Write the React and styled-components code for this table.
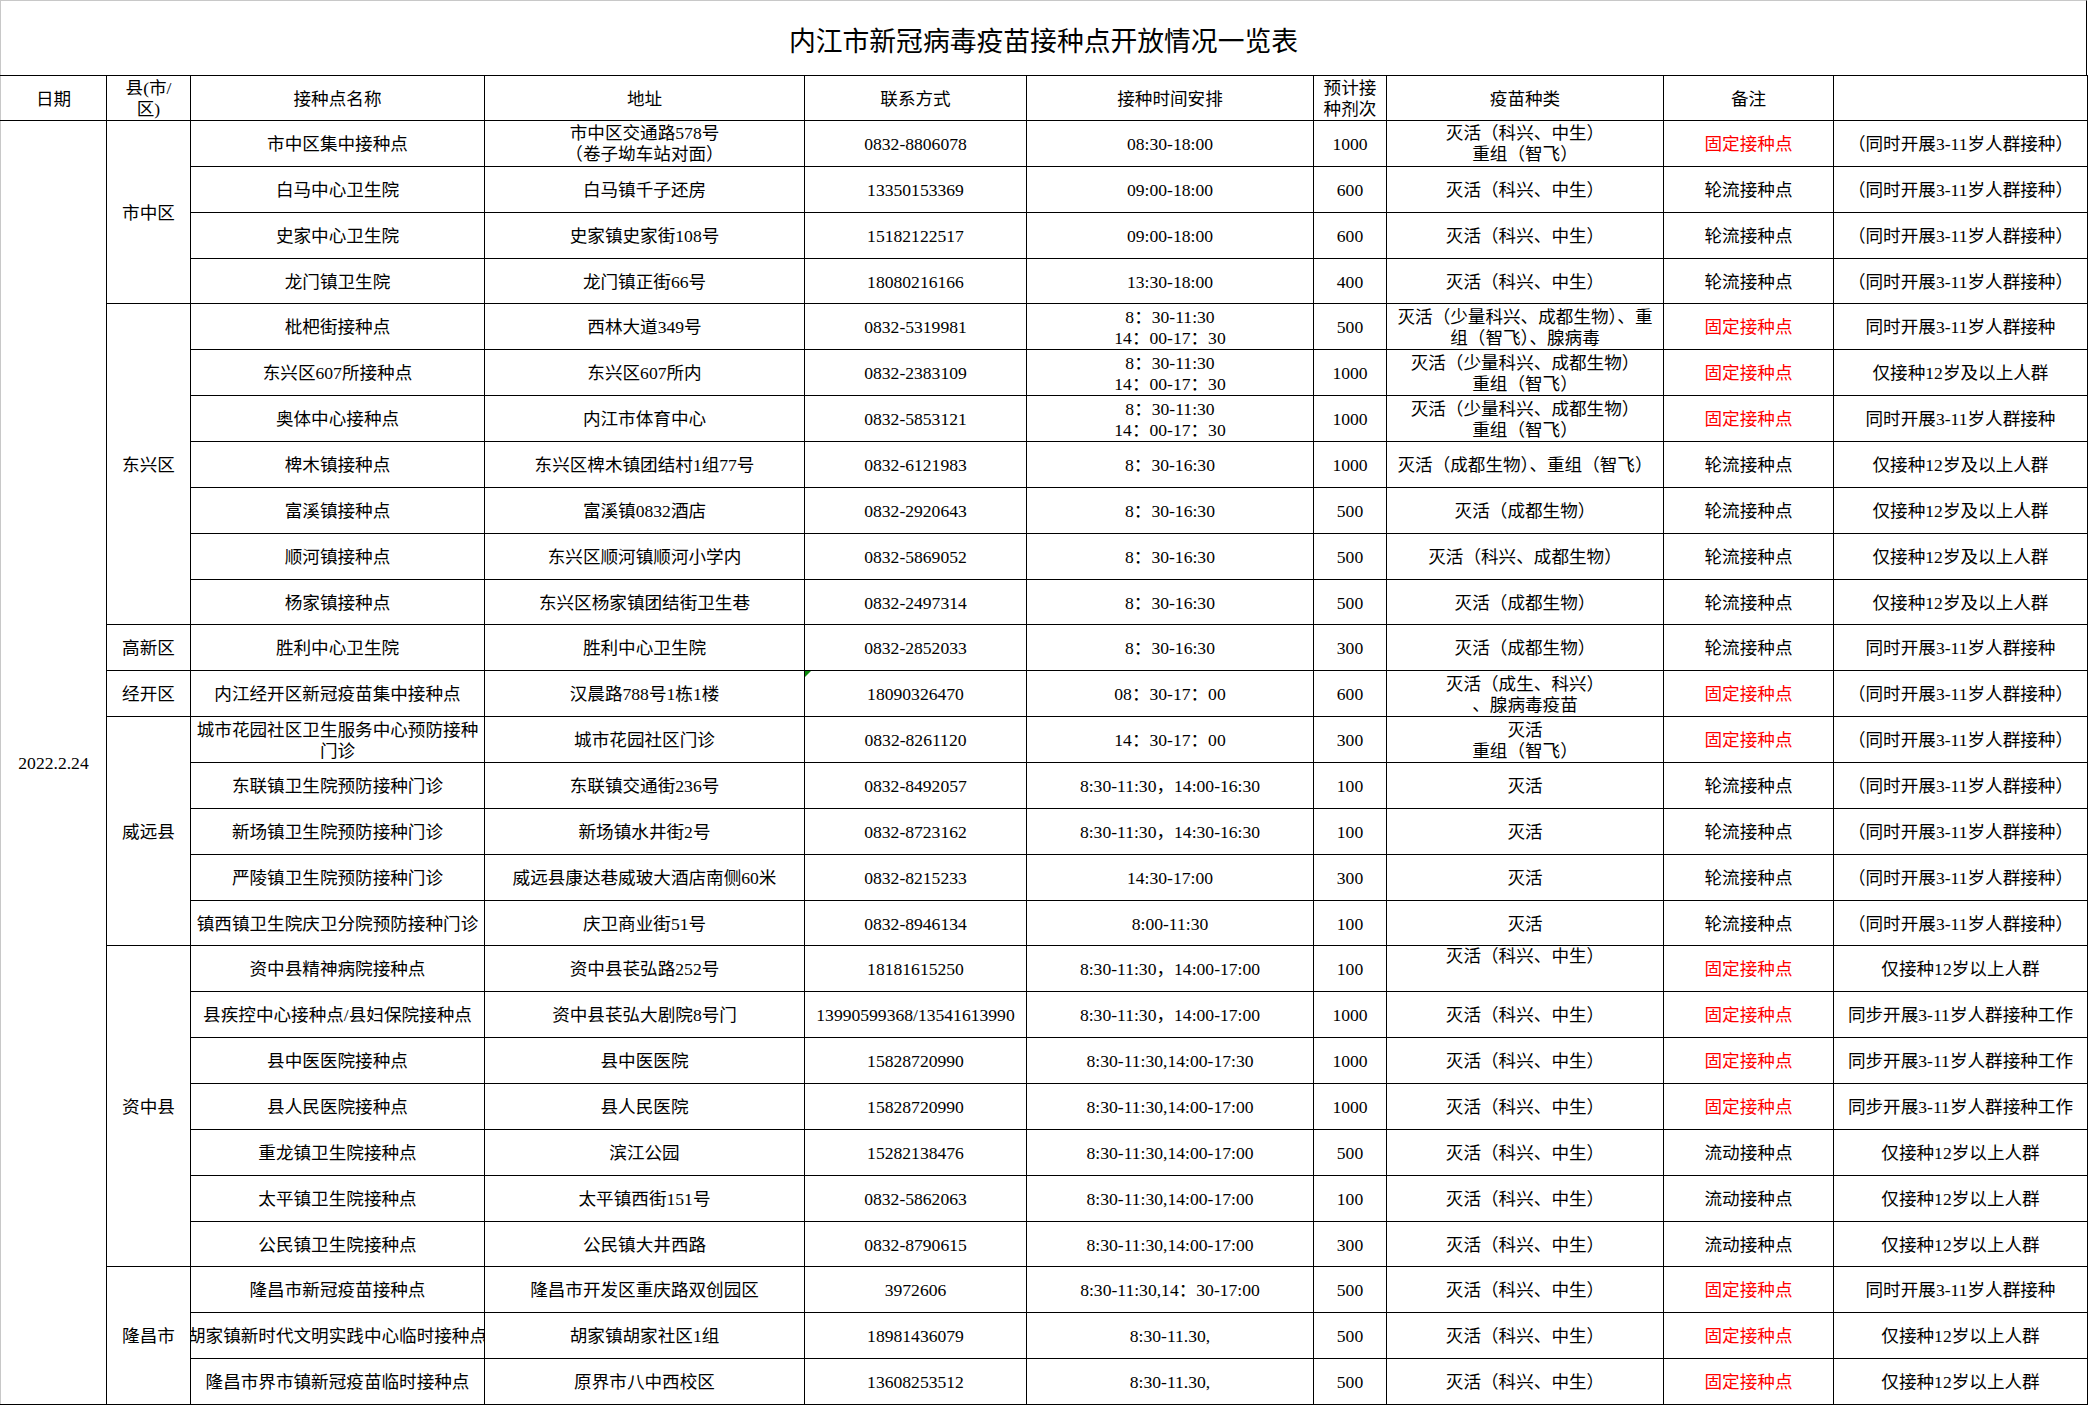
import React from 'react';
import styled, { createGlobalStyle, css } from 'styled-components';

const GlobalStyle = createGlobalStyle`
  html, body { margin: 0; padding: 0; background: #fff; }
  body {
    font-family: "Liberation Serif", "Noto Sans CJK SC", serif;
    color: #000;
  }
`;

const GRID_GREY = '#c8c8c8';

const Sheet = styled.div`
  width: 2087px;
`;

const Title = styled.div`
  height: 75px;
  box-sizing: border-box;
  border-top: 1px solid ${GRID_GREY};
  border-left: 1px solid ${GRID_GREY};
  border-right: 1px solid #000;
  display: flex;
  align-items: center;
  justify-content: center;
  padding-top: 7px;
  font-size: 26.8px;
  line-height: 30px;
`;

const Table = styled.table`
  border-collapse: collapse;
  table-layout: fixed;
  width: 2087px;
  font-size: 17.6px;
  line-height: 21px;
`;

const Col = styled.col`
  width: ${(p) => p.$w}px;
`;

const HeadRow = styled.tr`
  height: 45px;
`;

const DataRow = styled.tr`
  height: 45.86px;
`;

const cellBase = css`
  border: 1px solid #000;
  border-left-color: ${(p) => (p.$edge ? GRID_GREY : '#000')};
  padding: 0;
  font-weight: 400;
  vertical-align: ${(p) => (p.$top ? 'top' : 'middle')};
  color: ${(p) => (p.$red ? '#ff0000' : '#000')};
  position: relative;
`;

const HeadCell = styled.th`
  ${cellBase}
`;

const Cell = styled.td`
  ${cellBase}
`;

const Lines = styled.div`
  display: flex;
  flex-direction: column;
  align-items: center;
  justify-content: center;
  overflow: hidden;
  padding: ${(p) => (p.$top ? '0' : '2px')} 2px 0;
`;

const Line = styled.span`
  white-space: nowrap;
`;

const Flag = styled.span`
  position: absolute;
  top: 0;
  left: 0;
  width: 0;
  height: 0;
  border-top: 6px solid #0a8a0a;
  border-right: 6px solid transparent;
`;

const Text = ({ children, top }) => (
  <Lines $top={top}>
    {String(children)
      .split('\n')
      .map((l, i) => (
        <Line key={i}>{l}</Line>
      ))}
  </Lines>
);

const T1 = '8：30-11:30\n14：00-17：30';
const V1 = '灭活（科兴、中生）';
const N1 = '（同时开展3-11岁人群接种）';
const N2 = '同时开展3-11岁人群接种';
const N3 = '仅接种12岁及以上人群';
const N4 = '仅接种12岁以上人群';
const N5 = '同步开展3-11岁人群接种工作';
const FIX = '固定接种点';
const ROT = '轮流接种点';
const MOV = '流动接种点';

const groups = [
  {
    county: '市中区',
    rows: [
      ['市中区集中接种点', '市中区交通路578号\n（卷子坳车站对面）', '0832-8806078', '08:30-18:00', '1000', '灭活（科兴、中生）\n重组（智飞）', FIX, N1],
      ['白马中心卫生院', '白马镇千子还房', '13350153369', '09:00-18:00', '600', V1, ROT, N1],
      ['史家中心卫生院', '史家镇史家街108号', '15182122517', '09:00-18:00', '600', V1, ROT, N1],
      ['龙门镇卫生院', '龙门镇正街66号', '18080216166', '13:30-18:00', '400', V1, ROT, N1],
    ],
  },
  {
    county: '东兴区',
    rows: [
      ['枇杷街接种点', '西林大道349号', '0832-5319981', T1, '500', '灭活（少量科兴、成都生物）、重\n组（智飞）、腺病毒', FIX, N2],
      ['东兴区607所接种点', '东兴区607所内', '0832-2383109', T1, '1000', '灭活（少量科兴、成都生物）\n重组（智飞）', FIX, N3],
      ['奥体中心接种点', '内江市体育中心', '0832-5853121', T1, '1000', '灭活（少量科兴、成都生物）\n重组（智飞）', FIX, N2],
      ['椑木镇接种点', '东兴区椑木镇团结村1组77号', '0832-6121983', '8：30-16:30', '1000', '灭活（成都生物）、重组（智飞）', ROT, N3],
      ['富溪镇接种点', '富溪镇0832酒店', '0832-2920643', '8：30-16:30', '500', '灭活（成都生物）', ROT, N3],
      ['顺河镇接种点', '东兴区顺河镇顺河小学内', '0832-5869052', '8：30-16:30', '500', '灭活（科兴、成都生物）', ROT, N3],
      ['杨家镇接种点', '东兴区杨家镇团结街卫生巷', '0832-2497314', '8：30-16:30', '500', '灭活（成都生物）', ROT, N3],
    ],
  },
  {
    county: '高新区',
    rows: [
      ['胜利中心卫生院', '胜利中心卫生院', '0832-2852033', '8：30-16:30', '300', '灭活（成都生物）', ROT, N2],
    ],
  },
  {
    county: '经开区',
    rows: [
      ['内江经开区新冠疫苗集中接种点', '汉晨路788号1栋1楼', '18090326470', '08：30-17：00', '600', '灭活（成生、科兴）\n、腺病毒疫苗', FIX, N1, { flag: true }],
    ],
  },
  {
    county: '威远县',
    rows: [
      ['城市花园社区卫生服务中心预防接种\n门诊', '城市花园社区门诊', '0832-8261120', '14：30-17：00', '300', '灭活\n重组（智飞）', FIX, N1],
      ['东联镇卫生院预防接种门诊', '东联镇交通街236号', '0832-8492057', '8:30-11:30，14:00-16:30', '100', '灭活', ROT, N1],
      ['新场镇卫生院预防接种门诊', '新场镇水井街2号', '0832-8723162', '8:30-11:30，14:30-16:30', '100', '灭活', ROT, N1],
      ['严陵镇卫生院预防接种门诊', '威远县康达巷威玻大酒店南侧60米', '0832-8215233', '14:30-17:00', '300', '灭活', ROT, N1],
      ['镇西镇卫生院庆卫分院预防接种门诊', '庆卫商业街51号', '0832-8946134', '8:00-11:30', '100', '灭活', ROT, N1],
    ],
  },
  {
    county: '资中县',
    rows: [
      ['资中县精神病院接种点', '资中县苌弘路252号', '18181615250', '8:30-11:30，14:00-17:00', '100', V1, FIX, N4, { vaccineTop: true }],
      ['县疾控中心接种点/县妇保院接种点', '资中县苌弘大剧院8号门', '13990599368/13541613990', '8:30-11:30，14:00-17:00', '1000', V1, FIX, N5],
      ['县中医医院接种点', '县中医医院', '15828720990', '8:30-11:30,14:00-17:30', '1000', V1, FIX, N5],
      ['县人民医院接种点', '县人民医院', '15828720990', '8:30-11:30,14:00-17:00', '1000', V1, FIX, N5],
      ['重龙镇卫生院接种点', '滨江公园', '15282138476', '8:30-11:30,14:00-17:00', '500', V1, MOV, N4],
      ['太平镇卫生院接种点', '太平镇西街151号', '0832-5862063', '8:30-11:30,14:00-17:00', '100', V1, MOV, N4],
      ['公民镇卫生院接种点', '公民镇大井西路', '0832-8790615', '8:30-11:30,14:00-17:00', '300', V1, MOV, N4],
    ],
  },
  {
    county: '隆昌市',
    rows: [
      ['隆昌市新冠疫苗接种点', '隆昌市开发区重庆路双创园区', '3972606', '8:30-11:30,14：30-17:00', '500', V1, FIX, N2],
      ['胡家镇新时代文明实践中心临时接种点', '胡家镇胡家社区1组', '18981436079', '8:30-11.30,', '500', V1, FIX, N4],
      ['隆昌市界市镇新冠疫苗临时接种点', '原界市八中西校区', '13608253512', '8:30-11.30,', '500', V1, FIX, N4],
    ],
  },
];

const widths = [106, 84, 294, 320, 222, 287, 73, 277, 170, 254];
const totalRows = groups.reduce((n, g) => n + g.rows.length, 0);

export default function App() {
  let rowIndex = 0;
  return (
    <Sheet>
      <GlobalStyle />
      <Title>内江市新冠病毒疫苗接种点开放情况一览表</Title>
      <Table>
        <colgroup>
          {widths.map((w, i) => (
            <Col key={i} $w={w} />
          ))}
        </colgroup>
        <thead>
          <HeadRow>
            <HeadCell $edge><Text>日期</Text></HeadCell>
            <HeadCell><Text>{'县(市/\n区)'}</Text></HeadCell>
            <HeadCell><Text>接种点名称</Text></HeadCell>
            <HeadCell><Text>地址</Text></HeadCell>
            <HeadCell><Text>联系方式</Text></HeadCell>
            <HeadCell><Text>接种时间安排</Text></HeadCell>
            <HeadCell><Text>{'预计接\n种剂次'}</Text></HeadCell>
            <HeadCell><Text>疫苗种类</Text></HeadCell>
            <HeadCell><Text>备注</Text></HeadCell>
            <HeadCell />
          </HeadRow>
        </thead>
        <tbody>
          {groups.map((g) =>
            g.rows.map((r, i) => {
              const [name, addr, phone, time, qty, vac, remark, note, opts = {}] = r;
              const isFirst = rowIndex === 0;
              rowIndex += 1;
              return (
                <DataRow key={`${g.county}-${i}`}>
                  {isFirst && (
                    <Cell $edge rowSpan={totalRows}>
                      <Text>2022.2.24</Text>
                    </Cell>
                  )}
                  {i === 0 && (
                    <Cell rowSpan={g.rows.length}>
                      <Text>{g.county}</Text>
                    </Cell>
                  )}
                  <Cell><Text>{name}</Text></Cell>
                  <Cell><Text>{addr}</Text></Cell>
                  <Cell>
                    {opts.flag && <Flag />}
                    <Text>{phone}</Text>
                  </Cell>
                  <Cell><Text>{time}</Text></Cell>
                  <Cell><Text>{qty}</Text></Cell>
                  <Cell $top={opts.vaccineTop}><Text top={opts.vaccineTop}>{vac}</Text></Cell>
                  <Cell $red={remark === FIX}><Text>{remark}</Text></Cell>
                  <Cell><Text>{note}</Text></Cell>
                </DataRow>
              );
            })
          )}
        </tbody>
      </Table>
    </Sheet>
  );
}
